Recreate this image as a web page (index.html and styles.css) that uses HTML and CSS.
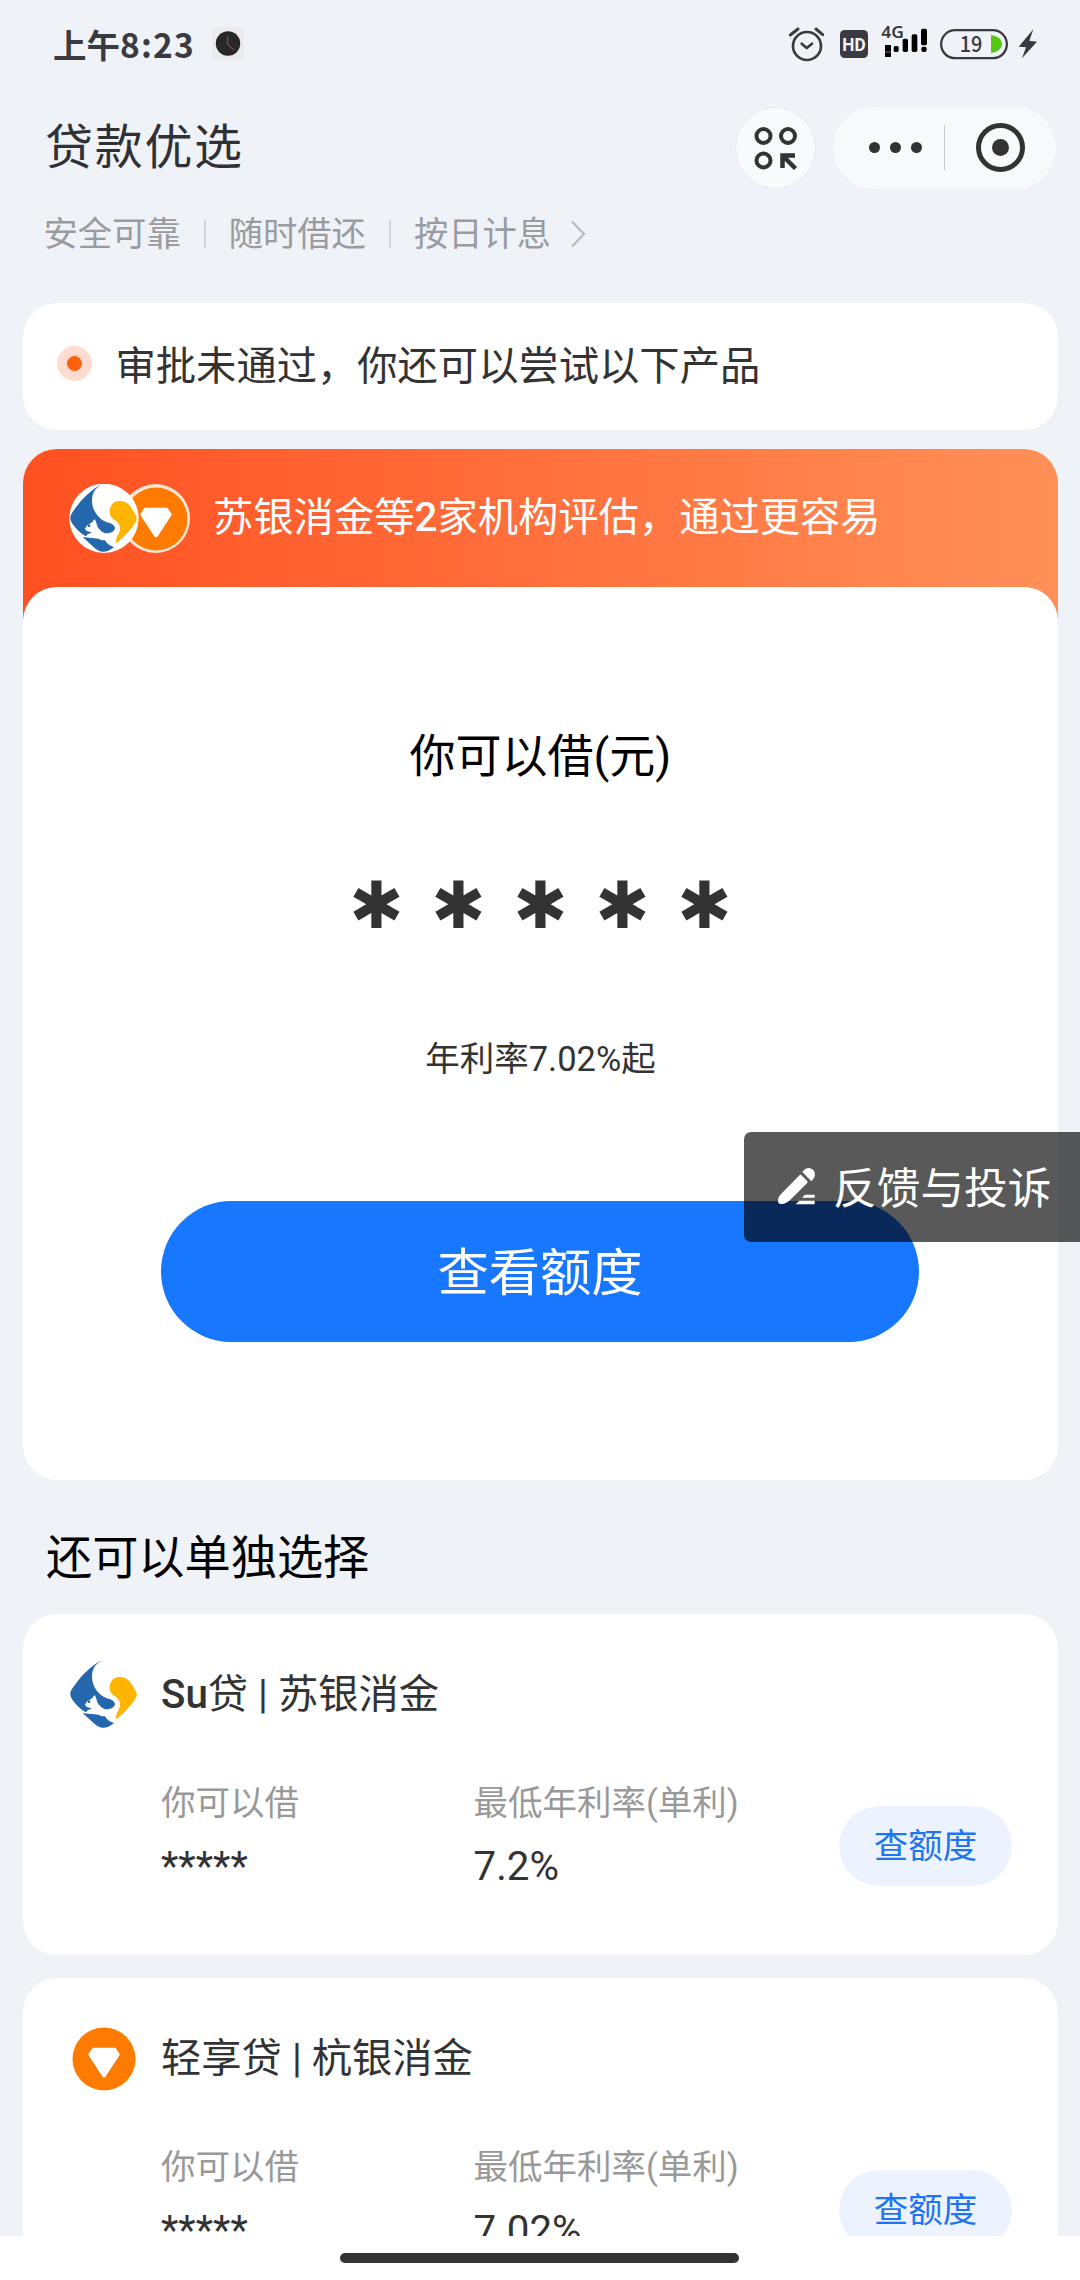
FILE: index.html
```html
<!DOCTYPE html>
<html lang="zh-CN">
<head>
<meta charset="utf-8">
<title>贷款优选</title>
<link rel="stylesheet" href="styles.css">
</head>
<body>
<svg width="0" height="0" class="defs">
  <symbol id="logo-su" viewBox="15 15 210 210">
    <circle cx="120" cy="118" r="104" fill="#fff"/>
    <path d="M117 15C98 20 62 51 42 77C26 98 18 108 19 119C20 130 35 150 60 169L66 172C70 165 78 163 84 160C74 158 65 156 63 150C66 140 74 134 83 131C87 127 90 122 93 121L97 131C99 144 108 156 122 162C135 165 153 158 153 147C152 136 137 132 127 129C105 121 84 95 84 65C84 42 94 25 117 15Z" fill="#2467ad"/>
    <path d="M56 174C72 177 90 177 103 179C111 182 116 186 122 183L126 188C134 199 143 201 150 204C141 212 131 217 120 218C109 219 99 213 91 206Z" fill="#2467ad"/>
    <circle cx="75" cy="140" r="4" fill="#2467ad"/>
    <path d="M164 66C181 64 194 73 202 86L215 107C220 117 219 124 212 134C199 153 179 175 157 193C154 184 158 174 165 162C172 148 168 134 153 124C142 117 137 110 137 97C138 79 149 67 164 66Z" fill="#ffb400"/>
  </symbol>
  <symbol id="logo-gem" viewBox="0 0 70 70">
    <circle cx="35" cy="35" r="31.5" fill="#ff7b00"/>
    <path d="M24 24.500H46L50 30.500L36 52Q35 53.500 34 52L20 30.500Z" fill="#fff" stroke="#fff" stroke-width="1.500" stroke-linejoin="round"/>
  </symbol>
</svg>

<div class="screen">
  <header class="status">
    <span class="clock">上午<b class="digits">8:23</b></span>
    <svg class="app-icon" width="36" height="36" viewBox="0 0 36 36">
      <rect x="2" y="1" width="32" height="33" rx="4" fill="#ebebed"/>
      <circle cx="18" cy="17.500" r="12.200" fill="#282828"/>
      <path d="M17.500 10.500V18L19.500 20" fill="none" stroke="#555" stroke-width="1.500"/>
      <path d="M19.500 20L24 24" stroke="#92434a" stroke-width="1.200"/>
    </svg>
    <div class="status-icons">
      <svg width="37" height="36" viewBox="24 18 111 108" fill="none" stroke="#3a3a40" stroke-linecap="round">
        <circle cx="81" cy="78" r="42" stroke-width="8"/>
        <path d="M65 71L80 84L96 71" stroke-width="8" stroke-linejoin="round"/>
        <path d="M31 45L54 27M108 27L128 44" stroke-width="9"/>
      </svg>
      <svg class="hd" width="28" height="36" viewBox="180 18 84 108">
        <rect x="180" y="30" width="84" height="84" rx="14" fill="#3a3a40"/>
        <text x="222" y="92" text-anchor="middle" textLength="70" lengthAdjust="spacingAndGlyphs" font-size="54" class="badge" fill="#f4f5f8">HD</text>
      </svg>
      <svg class="signal" width="48" height="36" viewBox="300 18 144 108" fill="#000">
        <text x="304" y="55" textLength="68" lengthAdjust="spacingAndGlyphs" font-size="48" class="net" fill="#3a3a40">4G</text>
        <path d="M315 75h18v20h-18zM315 97h18v14h-18z"/>
        <rect x="341" y="78" width="15" height="18" rx="5"/>
        <rect x="368" y="56" width="16" height="40" rx="5"/>
        <rect x="395" y="43" width="17" height="53" rx="5"/>
        <path d="M428 26h8q5 0 5 5v39q0 6-5 6h-8q-5 0-5-6V31q0-5 5-5z"/>
        <rect x="424" y="80" width="16" height="16" rx="6"/>
      </svg>
      <svg class="battery" width="68" height="36" viewBox="480 18 204 108">
        <rect x="483.500" y="30.500" width="197" height="84" rx="42" fill="none" stroke="#3a3a40" stroke-width="7"/>
        <path d="M633 45C654 48 666 59 666 72S654 97 633 99Z" fill="#55c911"/>
        <text x="573" y="97" text-anchor="middle" textLength="68" lengthAdjust="spacingAndGlyphs" font-size="66" class="level" fill="#3a3a40">19</text>
      </svg>
      <svg class="bolt" width="19" height="36" viewBox="714 18 57 108"><path d="M760 28L716 80L738 82L726 115L771 65L748 62Z" fill="#3a3a40"/></svg>
    </div>
  </header>

  <nav class="nav">
    <h1 class="title">贷款优选</h1>
    <div class="round-btn">
      <svg width="46" height="46" viewBox="0 0 46 46" fill="none" stroke="#333" stroke-width="4">
        <circle cx="14.500" cy="11" r="7"/><circle cx="39" cy="11" r="7"/><circle cx="14.500" cy="35.500" r="7"/>
        <path d="M33.500 43V30.500H46M34.500 31.500L46.500 43.500" stroke-width="4.500"/>
      </svg>
    </div>
    <div class="capsule">
      <span class="dots"><i></i><i></i><i></i></span>
      <span class="sep"></span>
      <span class="target"><i></i></span>
    </div>
  </nav>

  <div class="perks">
    <span>安全可靠</span><i class="bar"></i><span>随时借还</span><i class="bar"></i><span>按日计息</span>
    <svg class="chev" width="16" height="28" viewBox="0 0 16 28"><path d="M2 1.500L14 14L2 26.500" fill="none" stroke="#b9babd" stroke-width="2.200"/></svg>
  </div>

  <main class="content">
    <section class="notice"><span class="pulse"></span><p>审批未通过，你还可以尝试以下产品</p></section>

    <section class="offer">
      <div class="offer-head">
        <svg class="logo-a" width="70" height="70"><use href="#logo-su"/></svg>
        <span class="logo-b"><svg width="70" height="70"><use href="#logo-gem"/></svg></span>
        <p>苏银消金等<b>2</b>家机构评估，通过更容易</p>
      </div>
      <div class="offer-body">
        <h2>你可以借(元)</h2>
        <div class="masked"><span>✱</span><span>✱</span><span>✱</span><span>✱</span><span>✱</span></div>
        <p class="rate">年利率7.02%起</p>
        <button class="primary">查看额度</button>
      </div>
    </section>

    <h2 class="section-title">还可以单独选择</h2>

    <section class="product">
      <svg class="p-logo" width="70" height="70"><use href="#logo-su"/></svg>
      <h3><b>Su</b>贷 | 苏银消金</h3>
      <dl><dt>你可以借</dt><dd>*****</dd></dl>
      <dl><dt>最低年利率(单利)</dt><dd>7.2%</dd></dl>
      <button class="check">查额度</button>
    </section>
    <section class="product">
      <svg class="p-logo" width="70" height="70"><use href="#logo-gem"/></svg>
      <h3>轻享贷 | 杭银消金</h3>
      <dl><dt>你可以借</dt><dd>*****</dd></dl>
      <dl><dt>最低年利率(单利)</dt><dd>7.02%</dd></dl>
      <button class="check">查额度</button>
    </section>
  </main>

  <footer class="home"><i></i></footer>

  <div class="feedback">
    <svg width="38" height="38" viewBox="0 0 114 114" fill="#fff">
      <path d="M66 26Q70 21 75 26L90 41Q94 45 90 49L40 98Q28 110 14 111Q2 112 3 99Q3 90 10 83Z"/>
      <path d="M76 15Q88 -1 103 5Q118 13 112 30Q109 38 103 43Z"/>
      <path d="M84 83h29v9H75zM67 101h46v11H56z"/>
    </svg>
    <span>反馈与投诉</span>
  </div>
</div>
</body>
</html>
```
FILE: styles.css
```css
* { box-sizing: border-box; margin: 0; padding: 0; }
body { background: #eff2f7; font-family: Roboto, "Noto Sans CJK SC", sans-serif; color: #333; }
i { font-style: normal; }
svg { display: block; flex: none; }
button { border: 0; font-family: inherit; }
.defs { position: absolute; }
.screen { position: relative; width: 1080px; height: 2280px; overflow: hidden; display: flex; flex-direction: column; }

.status { height: 90px; flex: none; display: flex; align-items: center; padding: 0 43px 2px 53px; color: #3a3a40; }
.clock { width: 157px; font: 700 33.500px/40px "Noto Sans CJK SC", sans-serif; white-space: nowrap; padding-bottom: 1px; }
.digits { font-weight: 700; letter-spacing: 1.2px; }
.status-icons { margin-left: auto; display: flex; }
.hd { margin-left: 15px; }
.signal { margin-left: 12px; }
.battery { margin-left: 12px; }
.bolt { margin-left: 10px; }
.badge { font-family: Roboto, sans-serif; font-weight: 700; }
.net { font-family: "Noto Sans", sans-serif; font-weight: 600; }
.level { font-family: "Noto Sans CJK SC", sans-serif; font-weight: 500; }

.nav { height: 116px; flex: none; display: flex; align-items: center; padding: 0 24px 1px 45px; }
.title { flex: 1; font-size: 48px; line-height: 64px; font-weight: 400; letter-spacing: 1.7px; color: #303136; }
.round-btn { width: 81px; height: 82px; border-radius: 50%; background: #f9fafb; border: 1px solid #e9ebef; display: flex; align-items: center; justify-content: center; margin-right: 17px; }
.round-btn svg { margin-left: -8px; overflow: visible; }
.capsule { width: 223px; height: 82px; border-radius: 41px; background: #f8f9fb; display: flex; align-items: center; }
.dots { display: flex; gap: 10px; margin-left: 35.500px; }
.dots i { width: 11px; height: 11px; border-radius: 50%; background: #333; }
.sep { width: 1px; height: 45px; background: #c9cacd; margin-left: 22px; }
.target { width: 49px; height: 49px; border: 5px solid #333; border-radius: 50%; margin-left: 31px; display: flex; align-items: center; justify-content: center; }
.target i { width: 17px; height: 17px; border-radius: 50%; background: #333; }

.perks { height: 97px; flex: none; display: flex; align-items: flex-start; padding: 8px 0 0 43.500px; font-size: 34.300px; line-height: 40px; color: #999b9f; }
.bar { width: 2px; height: 28px; background: #d3d4d8; margin: 6px 23px 0; }
.chev { margin: 6px 0 0 19px; }

.content { flex: 1; min-height: 0; overflow: hidden; padding: 0 22px 0 23px; }
.notice { height: 127px; border-radius: 34px; background: #fff; display: flex; align-items: center; padding-left: 34px; padding-bottom: 6px; font-size: 40.300px; }
.notice p { margin-top: -3px; }
.pulse { width: 35px; height: 35px; border-radius: 50%; border: 10.500px solid #ffdccf; background: #ff6010; margin-right: 23.500px; }

.offer { margin-top: 19px; border-radius: 34px; background: linear-gradient(90deg, #ff5021, #ff9058) top / 100% 180px no-repeat; }
.offer-head { height: 138px; display: flex; align-items: center; padding: 1px 0 0 45.500px; color: #fff; font-size: 40.300px; }
.offer-head p { margin: -11px 0 0 23px; }
.offer-head b { font-weight: 500; }
.logo-a { z-index: 1; }
.logo-b { width: 69px; height: 69px; border-radius: 50%; background: #ffe6d5; margin-left: -17.500px; display: flex; align-items: center; justify-content: center; }
.offer-body { height: 893px; border-radius: 34px; background: #fff; display: flex; flex-direction: column; align-items: center; }
.offer-body h2 { margin-top: 139px; font-size: 46px; line-height: 60px; font-weight: 400; color: #000; }
.masked { display: flex; margin-top: 80px; height: 80px; font: 700 65px/80px "DejaVu Sans", sans-serif; }
.masked span { width: 82px; text-align: center; }
.rate { margin-top: 88px; font-size: 34.500px; line-height: 50px; }
.primary { margin-top: 117px; width: 758px; height: 141px; border-radius: 71px; background: #1777ff; color: #fff; font-size: 51.300px; padding-bottom: 7px; margin-right: 1px; }

.section-title { margin: 46px 0 0 23px; font-size: 46.200px; line-height: 64px; font-weight: 400; color: #000; }
.product { margin-top: 24px; height: 341px; border-radius: 34px; background: #fff; display: grid; grid-template-columns: 92px 312.500px 1fr 173px; grid-template-rows: 70px 1fr; padding: 46px 46px 0 46px; }
.product + .product { margin-top: 23px; }
.product h3 { grid-column: 2 / -1; font-size: 40.300px; line-height: 70px; font-weight: 400; }
.product h3 b { font-weight: 500; }
.product dl { padding-top: 48px; }
.product dl:first-of-type { grid-column: 2; }
.product dt { font-size: 34.500px; line-height: 50px; color: #999; white-space: nowrap; }
.product dd { font-size: 40.300px; line-height: 50px; margin-top: 14px; }
.check { margin-top: 76px; height: 80px; border-radius: 40px; background: #ecf3ff; color: #1f74f2; font-size: 34.500px; padding-bottom: 6px; }

.home { flex: none; height: 44px; background: #fff; display: flex; justify-content: center; padding: 17px 1px 0 0; }
.home i { width: 399px; height: 10px; border-radius: 5px; background: #333; }

.feedback { position: absolute; right: 0; top: 1132px; width: 336px; height: 110px; border-radius: 7px 0 0 7px; background: rgba(0, 0, 0, .65); color: #fff; display: flex; align-items: center; padding-left: 33px; font-size: 43.700px; white-space: nowrap; }
.feedback svg { margin-right: 18px; margin-bottom: 3px; }
.feedback span { margin-top: -4px; }
```
